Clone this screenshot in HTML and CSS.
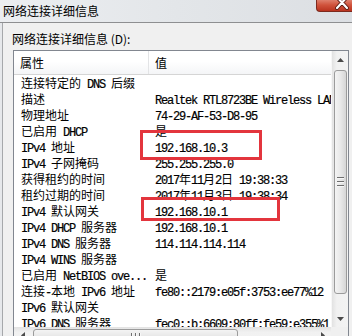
FILE: index.html
```html
<!DOCTYPE html>
<html lang="zh-CN">
<head>
<meta charset="utf-8">
<title>网络连接详细信息</title>
<link rel="stylesheet" href="styles.css">
</head>
<body>
<div class="window">
  <div class="titlebar">
    <span class="title">网络连接详细信息</span>
    <div class="close">
      <svg class="close-x" width="14" height="10" viewBox="0 0 14 10"><path d="M2 -3 L12 8 M12 -3 L2 8" stroke="#5a1a10" stroke-width="4" stroke-linecap="round"/><path d="M2 -3 L12 8 M12 -3 L2 8" stroke="#ffffff" stroke-width="2.2" stroke-linecap="round"/></svg>
    </div>
  </div>
  <div class="frame">
    <div class="label">网络连接详细信息 (D):</div>
    <div class="listbox">
      <div class="main">
        <div class="header">
          <div class="hc c1">属性</div>
          <div class="hc c2">值</div>
        </div>
        <div class="rows">
          <div class="row"><div class="c1">连接特定的<span class="en"> DNS </span>后缀</div><div class="c2"></div></div>
          <div class="row"><div class="c1">描述</div><div class="c2"><span class="en">Realtek RTL8723BE Wireless LAN 802.11n PCI-E NIC</span></div></div>
          <div class="row"><div class="c1">物理地址</div><div class="c2"><span class="en">74-29-AF-53-D8-95</span></div></div>
          <div class="row"><div class="c1">已启用<span class="en"> DHCP</span></div><div class="c2">是</div></div>
          <div class="row"><div class="c1"><span class="en">IPv4 </span>地址</div><div class="c2"><span class="en">192.168.10.3</span></div></div>
          <div class="row"><div class="c1"><span class="en">IPv4 </span>子网掩码</div><div class="c2"><span class="en">255.255.255.0</span></div></div>
          <div class="row"><div class="c1">获得租约的时间</div><div class="c2"><span class="en">2017</span>年<span class="en">11</span>月<span class="en">2</span>日<span class="en"> 19:38:33</span></div></div>
          <div class="row"><div class="c1">租约过期的时间</div><div class="c2"><span class="en">2017</span>年<span class="en">11</span>月<span class="en">3</span>日<span class="en"> 19:38:34</span></div></div>
          <div class="row"><div class="c1"><span class="en">IPv4 </span>默认网关</div><div class="c2"><span class="en">192.168.10.1</span></div></div>
          <div class="row"><div class="c1"><span class="en">IPv4 DHCP </span>服务器</div><div class="c2"><span class="en">192.168.10.1</span></div></div>
          <div class="row"><div class="c1"><span class="en">IPv4 DNS </span>服务器</div><div class="c2"><span class="en">114.114.114.114</span></div></div>
          <div class="row"><div class="c1"><span class="en">IPv4 WINS </span>服务器</div><div class="c2"></div></div>
          <div class="row"><div class="c1">已启用<span class="en"> NetBIOS ove...</span></div><div class="c2">是</div></div>
          <div class="row"><div class="c1">连接<span class="en">-</span>本地<span class="en"> IPv6 </span>地址</div><div class="c2"><span class="en">fe80::2179:e05f:3753:ee77%12</span></div></div>
          <div class="row"><div class="c1"><span class="en">IPv6 </span>默认网关</div><div class="c2"></div></div>
          <div class="row"><div class="c1"><span class="en">IPv6 DNS </span>服务器</div><div class="c2"><span class="en">fec0::b:6609:80ff:fe59:e355%1</span></div></div>
        </div>
      </div>
      <div class="vscroll">
        <div class="sbtn"><svg width="7" height="4" viewBox="0 0 7 4"><polygon points="3.5,0 7,4 0,4" fill="#4a4a4a"/></svg></div>
        <div class="vtrack">
          <div class="vthumb"><span class="grip-h"></span><span class="grip-h"></span><span class="grip-h"></span></div>
        </div>
        <div class="sbtn"><svg width="7" height="4" viewBox="0 0 7 4"><polygon points="0,0 7,0 3.5,4" fill="#4a4a4a"/></svg></div>
      </div>
      <div class="hscroll">
        <div class="sbtn"><svg width="4" height="7" viewBox="0 0 4 7"><polygon points="0,3.5 4,0 4,7" fill="#4a4a4a"/></svg></div>
        <div class="htrack">
          <div class="hthumb"><span class="grip-v"></span><span class="grip-v"></span><span class="grip-v"></span></div>
        </div>
        <div class="sbtn"><svg width="4" height="7" viewBox="0 0 4 7"><polygon points="0,0 4,3.5 0,7" fill="#4a4a4a"/></svg></div>
      </div>
      <div class="corner"></div>
    </div>
  </div>
  <div class="mark mark-ip"></div>
  <div class="mark mark-gw"></div>
</div>
</body>
</html>
```

FILE: styles.css
```css
html, body {
  margin: 0;
  padding: 0;
}
body {
  width: 352px;
  height: 336px;
  overflow: hidden;
  background: #f0f0f0;
  font-family: "Noto Sans CJK SC", "Microsoft YaHei", sans-serif;
  font-size: 12px;
  color: #000;
}
.window {
  position: relative;
  height: 336px;
  background: #e6e8eb;
}
.titlebar {
  height: 22px;
  display: flex;
  align-items: flex-start;
  border-bottom: 1px solid #8e8f91;
  background: linear-gradient(90deg, #eceef1 0%, #e3e6e9 50%, #dcdfe3 100%);
}
.title {
  padding: 3px 0 0 3px;
  line-height: 15px;
}
.close {
  margin-left: auto;
  width: 36px;
  height: 12px;
  box-sizing: border-box;
  border-left: 1px solid #7d2a1e;
  border-bottom: 1px solid #7d2a1e;
  border-bottom-left-radius: 4px;
  background: linear-gradient(#de7f6c 0%, #d0533c 45%, #b9331f 100%);
  overflow: hidden;
}
.close-x {
  display: block;
  margin-left: 18px;
}
.frame {
  margin-left: 2px;
  border-left: 1px solid #a6a8ab;
  background: #f0f0f0;
  padding: 8px 0 0 9px;
  height: 400px;
}
.label {
  line-height: 16px;
  height: 16px;
  margin-bottom: 3px;
}
.listbox {
  margin-left: 1px;
  width: 336px;
  box-sizing: border-box;
  border: 1px solid #828790;
  background: #fff;
  display: grid;
  grid-template-columns: 1fr 17px;
  grid-template-rows: 276px 17px;
}
.main {
  overflow: hidden;
  display: flex;
  flex-direction: column;
}
.header {
  height: 23px;
  flex: none;
  display: flex;
  border-bottom: 1px solid #d5d5d5;
  background: linear-gradient(#ffffff 0%, #ffffff 45%, #f4f5f7 100%);
}
.hc {
  line-height: 23px;
}
.c1 {
  width: 135px;
  flex: none;
  box-sizing: border-box;
  padding-left: 7px;
  white-space: nowrap;
  overflow: hidden;
}
.c2 {
  flex: none;
  padding-left: 6px;
  white-space: nowrap;
}
.hc.c1 {
  border-right: 1px solid #e3e4e6;
  padding-left: 6px;
}
.rows {
  flex: 1;
  overflow: hidden;
}
.row {
  display: flex;
  height: 16px;
  line-height: 16px;
}
.en {
  font-family: "Liberation Mono", "DejaVu Sans Mono", monospace;
  font-size: 12px;
  letter-spacing: -1.2px;
  white-space: pre;
  -webkit-text-stroke: 0.2px #000;
}
.vscroll {
  display: flex;
  flex-direction: column;
  background: linear-gradient(90deg, #e2e2e2 0%, #f1f1f1 30%, #f3f3f3 100%);
  border-left: 1px solid #f7f7f7;
  box-sizing: border-box;
}
.sbtn {
  width: 17px;
  height: 17px;
  flex: none;
  display: flex;
  align-items: center;
  justify-content: center;
}
.vtrack {
  flex: 1;
  padding: 2px 1px 0 2px;
}
.vthumb {
  height: 224px;
  box-sizing: border-box;
  border: 1px solid #9b9b9b;
  border-radius: 3px;
  background: linear-gradient(90deg, #f4f4f4 0%, #e8e8e8 50%, #d6d6d6 100%);
  display: flex;
  flex-direction: column;
  align-items: center;
  justify-content: center;
  gap: 2px;
}
.grip-h {
  width: 7px;
  height: 1px;
  background: #6e6e6e;
  border-bottom: 1px solid #f7f7f7;
}
.hscroll {
  display: flex;
  background: linear-gradient(#e2e2e2 0%, #f1f1f1 30%, #f3f3f3 100%);
}
.htrack {
  flex: 1;
  padding: 2px 0 1px 2px;
}
.hthumb {
  width: 205px;
  height: 14px;
  box-sizing: border-box;
  border: 1px solid #9b9b9b;
  border-radius: 3px;
  background: linear-gradient(#f4f4f4 0%, #e8e8e8 50%, #d6d6d6 100%);
  display: flex;
  align-items: center;
  justify-content: center;
  gap: 2px;
}
.grip-v {
  width: 1px;
  height: 7px;
  background: #6e6e6e;
  border-right: 1px solid #f7f7f7;
}
.corner {
  background: #f0f0f0;
}
.mark {
  position: absolute;
  box-sizing: border-box;
  border: 3px solid #e3353d;
}
.mark-ip {
  left: 140px;
  top: 130px;
  width: 122px;
  height: 30px;
}
.mark-gw {
  left: 141px;
  top: 197px;
  width: 139px;
  height: 24px;
}
```
